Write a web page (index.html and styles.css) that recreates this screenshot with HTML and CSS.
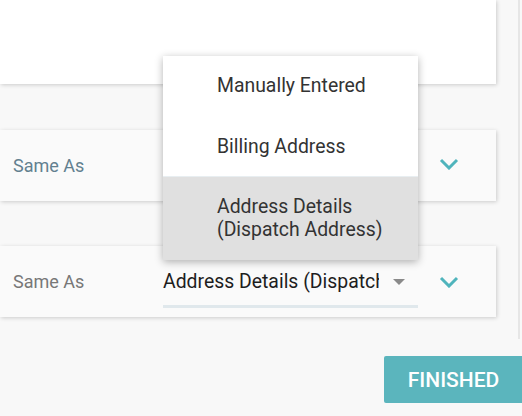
FILE: index.html
```html
<!DOCTYPE html>
<html>
<head>
<meta charset="utf-8">
<link rel="stylesheet" href="styles.css">
</head>
<body>
<div class="page">
  <div class="column">
    <div class="card card-top"></div>
    <div class="card row row-first">
      <span class="label label-blue">Same As</span>
      <div class="select">
        <span class="select-text"></span>
        <span class="caret"></span>
      </div>
      <svg class="chevron" width="20" height="12" viewBox="0 0 20 12"><polyline points="2,2 10,10 18,2" fill="none" stroke="#4fb4bc" stroke-width="3"/></svg>
    </div>
    <div class="card row row-second">
      <span class="label">Same As</span>
      <div class="select">
        <span class="select-text">Address Details (Dispatch Address)</span>
        <span class="caret"></span>
      </div>
      <svg class="chevron" width="20" height="12" viewBox="0 0 20 12"><polyline points="2,2 10,10 18,2" fill="none" stroke="#4fb4bc" stroke-width="3"/></svg>
    </div>
  </div>
  <div class="footer">
    <button class="finish">FINISHED</button>
  </div>
  <ul class="menu">
    <li class="item item-first">Manually Entered</li>
    <li class="item">Billing Address</li>
    <li class="item item-active">Address Details<br>(Dispatch Address)</li>
  </ul>
</div>
</body>
</html>
```

FILE: styles.css
```css
html, body {
  margin: 0;
  padding: 0;
}
body {
  background: #f8f8f8;
  font-family: Roboto, "Liberation Sans", sans-serif;
}
.page {
  position: relative;
  width: 522px;
  height: 416px;
  overflow: hidden;
}
.column {
  width: 518px;
  height: 339px;
  border-right: 2px solid #e6e6e6;
  display: flex;
  flex-direction: column;
}
.card {
  width: 496px;
  flex: none;
  box-shadow: 1px 1px 4px rgba(0, 0, 0, 0.18);
}
.card-top {
  height: 84px;
  background: #ffffff;
}
.row {
  height: 71px;
  background: #fafafa;
  display: flex;
  align-items: center;
  box-sizing: border-box;
  padding-left: 13px;
}
.row-first {
  margin-top: 46px;
}
.row-second {
  margin-top: 45px;
}
.label {
  width: 150px;
  font-size: 18px;
  color: #777777;
}
.label-blue {
  color: #62808f;
}
.select {
  width: 255px;
  height: 50px;
  margin-top: 2px;
  box-sizing: border-box;
  border-bottom: 3px solid #e0e8ec;
  display: flex;
  align-items: center;
}
.select-text {
  width: 216px;
  overflow: hidden;
  white-space: nowrap;
  font-size: 19.4px;
  color: #1e1e1e;
}
.caret {
  margin-left: 14px;
  margin-top: 2px;
  width: 0;
  height: 0;
  border-left: 6px solid transparent;
  border-right: 6px solid transparent;
  border-top: 6px solid #8a8a8a;
}
.chevron {
  margin-left: 21px;
}
.row-first .chevron {
  margin-top: -4px;
}
.footer {
  display: flex;
  justify-content: flex-end;
  margin-top: 17px;
}
.finish {
  width: 138px;
  height: 47px;
  border: none;
  border-radius: 2px 0 0 2px;
  background: #5bb5bd;
  color: #ffffff;
  font-family: Roboto, "Liberation Sans", sans-serif;
  font-size: 21px;
  font-weight: 500;
  padding: 0 0 0 1px;
}
.menu {
  position: absolute;
  left: 163px;
  top: 56px;
  width: 255px;
  margin: 0;
  padding: 0;
  list-style: none;
  background: #ffffff;
  box-shadow: 0 2px 8px rgba(0, 0, 0, 0.3);
}
.item {
  box-sizing: border-box;
  height: 60px;
  display: flex;
  align-items: center;
  padding-left: 54px;
  font-size: 19.4px;
  color: #333333;
}
.item-first {
  padding-bottom: 2px;
}
.item-active {
  height: 84px;
  padding-top: 18px;
  padding-bottom: 19px;
  line-height: 23px;
  background: #e0e0e0;
  border-top: 1px solid #e8eef1;
  display: block;
}
```
